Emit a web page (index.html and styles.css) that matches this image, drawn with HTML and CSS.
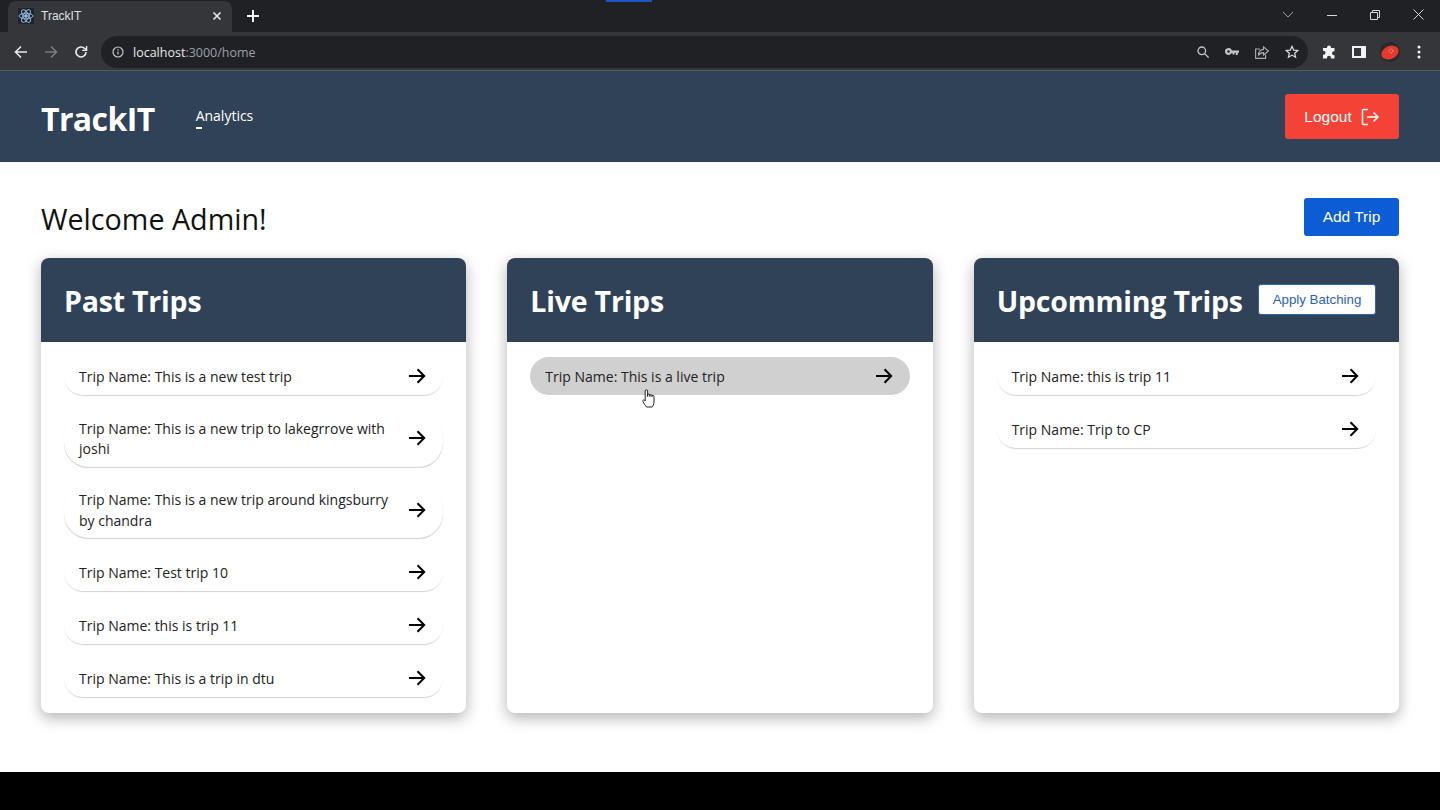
FILE: index.html
```html
<!DOCTYPE html>
<html lang="en">
<head>
    <meta charset="UTF-8">
    <meta name="viewport" content="width=device-width, initial-scale=1.0">
    <title>TrackIT</title>
    <link rel="stylesheet" href="styles.css">
</head>
<body>
    <div class="load-strip"></div>

    <!-- browser chrome -->
    <div class="tabbar">
        <div class="tab">
            <svg class="favicon" width="16" height="16" viewBox="0 0 16 16" fill="none" stroke="#8ab4d8" stroke-width="1">
                <rect width="16" height="16" fill="#20232a" stroke="none"/>
                <ellipse cx="8" cy="8" rx="7" ry="2.8"/>
                <ellipse cx="8" cy="8" rx="7" ry="2.8" transform="rotate(60 8 8)"/>
                <ellipse cx="8" cy="8" rx="7" ry="2.8" transform="rotate(120 8 8)"/>
                <circle cx="8" cy="8" r="1.4" fill="#8ab4d8"/>
            </svg>
            <span class="tab-title">TrackIT</span>
            <svg class="tab-close" width="10" height="10" viewBox="0 0 10 10" stroke="#e8eaed" stroke-width="1.6">
                <path d="M1.5 1.5l7 7M8.5 1.5l-7 7"/>
            </svg>
        </div>
        <svg class="new-tab" width="12" height="12" viewBox="0 0 12 12" stroke="#f1f3f4" stroke-width="2">
            <path d="M6 0v12M0 6h12"/>
        </svg>
        <div class="window-controls">
            <svg width="12" height="8" viewBox="0 0 12 8" fill="none" stroke="#9aa0a6"><path d="M1 1l5 5 5-5"/></svg>
            <svg width="10" height="10" viewBox="0 0 10 10" stroke="#d5d7da"><path d="M0 5.5h10"/></svg>
            <svg width="10" height="10" viewBox="0 0 10 10" fill="none" stroke="#d5d7da"><path d="M.5 2.5h7v7h-7zM2.5 2.5v-2h7v7h-2"/></svg>
            <svg width="11" height="11" viewBox="0 0 11 11" stroke="#d5d7da"><path d="M.5.5l10 10M10.5.5l-10 10"/></svg>
        </div>
    </div>
    <div class="toolbar">
        <svg class="tool-btn" width="14" height="14" viewBox="0 0 14 14" fill="none" stroke="#e8eaed" stroke-width="1.6"><path d="M13 7H2M7 1.5L1.5 7 7 12.5"/></svg>
        <svg class="tool-btn" width="14" height="14" viewBox="0 0 14 14" fill="none" stroke="#7b7e82" stroke-width="1.6"><path d="M1 7h11M7 1.5L12.5 7 7 12.5"/></svg>
        <svg class="tool-btn" width="14" height="14" viewBox="0 0 14 14" fill="none" stroke="#e8eaed" stroke-width="1.6"><path d="M12 7a5 5 0 1 1-1.5-3.6L12.5 5"/><path d="M12.6 1v4.4H8.2" stroke-width="1.4"/></svg>
        <div class="omnibox">
            <svg width="12" height="12" viewBox="0 0 12 12" fill="none" stroke="#c4c7ca" stroke-width="1.2"><circle cx="6" cy="6" r="5"/><path d="M6 5.4v3M6 3.2v1.2"/></svg>
            <span class="url"><span class="url-host">localhost</span>:3000/home</span>
            <div class="omni-icons">
                <svg width="12" height="12" viewBox="0 0 12 12" fill="none" stroke="#c4c7ca" stroke-width="1.3"><circle cx="4.8" cy="4.8" r="3.8"/><path d="M7.6 7.6l4 4"/></svg>
                <svg width="14" height="8" viewBox="0 0 14 8" fill="#c4c7ca"><path d="M3.5 0a3.5 3.5 0 1 1-3.2 5h0A3.5 3.5 0 0 1 3.5 0zm0 2.2a1.3 1.3 0 1 0 0 2.6 1.3 1.3 0 0 0 0-2.6zM6.5 2.5H14v2.2h-1.2V7h-2V4.700H9.500V6.500H7.500V4.700H6.500z"/></svg>
                <svg width="14" height="13" viewBox="0 0 14 13" fill="none" stroke="#a9acb0" stroke-width="1.1"><path d="M5 3H.6v9.400h10V8.500"/><path d="M8.500.8L13.400 5 8.500 9V6.600C6 6.600 4.500 7.400 3.400 9.500 3.600 6 5.500 3.700 8.500 3.400z"/></svg>
                <svg width="14" height="14" viewBox="0 0 14 14" fill="none" stroke="#dadce0" stroke-width="1.2"><path d="M7 1.300l1.700 3.800 4.100.4-3.100 2.700.9 4L7 10.100l-3.600 2.100.9-4-3.100-2.700 4.100-.4z"/></svg>
            </div>
        </div>
        <div class="tool-icons">
            <svg width="14" height="14" viewBox="0 0 14 14" fill="#f1f3f4"><path d="M5 2.500a2 2 0 0 1 4 0V3h3.500v3.200H12a2 2 0 0 0 0 4h.5V13.500H9v-.7a2 2 0 0 0-4 0v.7H1V9.800h.5a2 2 0 0 0 0-4H1V3h4z"/></svg>
            <svg width="14" height="12" viewBox="0 0 14 12" fill="none"><rect width="14" height="12" fill="#f1f3f4"/><rect x="2" y="2" width="7" height="8" fill="#35363a"/></svg>
            <svg class="avatar" width="20" height="20" viewBox="0 0 20 20"><circle cx="10" cy="10" r="10" fill="#26282b"/><ellipse cx="10" cy="10.500" rx="9" ry="6.500" fill="#e53a2b" transform="rotate(-25 10 10.500)"/><circle cx="11" cy="9" r="2" fill="none" stroke="#f5d5d0" stroke-width=".7" stroke-dasharray="1 1"/></svg>
            <svg width="4" height="14" viewBox="0 0 4 14" fill="#f1f3f4"><circle cx="2" cy="2" r="1.500"/><circle cx="2" cy="7" r="1.500"/><circle cx="2" cy="12" r="1.500"/></svg>
        </div>
    </div>

    <!-- app -->
    <nav class="navbar">
        <span class="brand">TrackIT</span>
        <a class="nav-link" href="#">Analytics</a>
        <button class="logout-btn">
            Logout
            <svg width="20" height="20" viewBox="0 0 20 20" fill="none" stroke="#fff" stroke-width="1.500"><path d="M8 2.500H3.500a1 1 0 0 0-1 1v13a1 1 0 0 0 1 1H8"/><path d="M7 10h11M13.500 5.500L18 10l-4.500 4.500"/></svg>
        </button>
    </nav>

    <main class="content">
        <div class="welcome-row">
            <h1 class="welcome">Welcome Admin!</h1>
            <button class="add-btn">Add Trip</button>
        </div>
        <div class="boards">
            <section class="board">
                <header class="board-head"><h2>Past Trips</h2></header>
                <ul class="trip-list">
                    <li class="trip"><span class="trip-name">Trip Name: This is a new test trip</span><svg class="arrow" width="18" height="16" viewBox="0 0 18 16" fill="none" stroke="#000" stroke-width="2"><path d="M1 8h15M9.500 1.200L16.200 8l-6.700 6.800"/></svg></li>
                    <li class="trip"><span class="trip-name">Trip Name: This is a new trip to lakegrrove with joshi</span><svg class="arrow" width="18" height="16" viewBox="0 0 18 16" fill="none" stroke="#000" stroke-width="2"><path d="M1 8h15M9.500 1.200L16.200 8l-6.700 6.800"/></svg></li>
                    <li class="trip"><span class="trip-name">Trip Name: This is a new trip around kingsburry by chandra</span><svg class="arrow" width="18" height="16" viewBox="0 0 18 16" fill="none" stroke="#000" stroke-width="2"><path d="M1 8h15M9.500 1.200L16.200 8l-6.700 6.800"/></svg></li>
                    <li class="trip"><span class="trip-name">Trip Name: Test trip 10</span><svg class="arrow" width="18" height="16" viewBox="0 0 18 16" fill="none" stroke="#000" stroke-width="2"><path d="M1 8h15M9.500 1.200L16.200 8l-6.700 6.800"/></svg></li>
                    <li class="trip"><span class="trip-name">Trip Name: this is trip 11</span><svg class="arrow" width="18" height="16" viewBox="0 0 18 16" fill="none" stroke="#000" stroke-width="2"><path d="M1 8h15M9.500 1.200L16.200 8l-6.700 6.800"/></svg></li>
                    <li class="trip"><span class="trip-name">Trip Name: This is a trip in dtu</span><svg class="arrow" width="18" height="16" viewBox="0 0 18 16" fill="none" stroke="#000" stroke-width="2"><path d="M1 8h15M9.500 1.200L16.200 8l-6.700 6.800"/></svg></li>
                </ul>
            </section>
            <section class="board">
                <header class="board-head"><h2>Live Trips</h2></header>
                <ul class="trip-list">
                    <li class="trip trip-hover"><span class="trip-name">Trip Name: This is a live trip</span><svg class="arrow" width="18" height="16" viewBox="0 0 18 16" fill="none" stroke="#000" stroke-width="2"><path d="M1 8h15M9.500 1.200L16.200 8l-6.700 6.800"/></svg></li>
                </ul>
            </section>
            <section class="board">
                <header class="board-head">
                    <h2>Upcomming Trips</h2>
                    <button class="batch-btn">Apply Batching</button>
                </header>
                <ul class="trip-list">
                    <li class="trip"><span class="trip-name">Trip Name: this is trip 11</span><svg class="arrow" width="18" height="16" viewBox="0 0 18 16" fill="none" stroke="#000" stroke-width="2"><path d="M1 8h15M9.500 1.200L16.200 8l-6.700 6.800"/></svg></li>
                    <li class="trip"><span class="trip-name">Trip Name: Trip to CP</span><svg class="arrow" width="18" height="16" viewBox="0 0 18 16" fill="none" stroke="#000" stroke-width="2"><path d="M1 8h15M9.500 1.200L16.200 8l-6.700 6.800"/></svg></li>
                </ul>
            </section>
        </div>
    </main>
    <div class="bottom-bar"></div>

    <!-- mouse pointer over the live trip -->
    <svg class="pointer" width="13" height="19" viewBox="0 0 13 19" fill="#fff" stroke="#222" stroke-width="1" stroke-linejoin="round">
        <path d="M3.200 10V2a1.200 1.200 0 0 1 2.400 0v5.500-1.300a1.100 1.100 0 0 1 2.200 0v1.300-.8a1.100 1.100 0 0 1 2.200 0v1-.3a1 1 0 0 1 2 0V13c0 2.500-1.300 4-1.800 5H4.500C3.500 16.500 2 15 1 12.500 .5 11 1.700 10 3.200 11.800z"/>
    </svg>
</body>
</html>
```

FILE: styles.css
```css
* {
    box-sizing: border-box;
}
html, body {
    height: 810px;
    overflow: hidden;
}
body {
    margin: 0;
    display: flex;
    flex-direction: column;
    font-family: "Open Sans", "Noto Sans", sans-serif;
    background: #fff;
    position: relative;
}
h1, h2, ul {
    margin: 0;
    padding: 0;
}
button {
    font-family: "Liberation Sans", Arial, sans-serif;
    cursor: pointer;
}

/* browser chrome */
.load-strip {
    position: absolute;
    top: 0;
    left: 606px;
    width: 46px;
    height: 2px;
    background: #1a56c4;
}
.tabbar {
    height: 32px;
    background: #202124;
    display: flex;
    align-items: center;
    flex-shrink: 0;
}
.tab {
    margin-left: 8px;
    align-self: flex-end;
    width: 224px;
    height: 31px;
    background: #35363a;
    border-radius: 8px 8px 0 0;
    display: flex;
    align-items: center;
    padding: 0 10px 2px;
    gap: 7px;
}
.tab-title {
    flex: 1;
    font-family: "Liberation Sans", sans-serif;
    font-size: 12px;
    color: #dfe1e5;
}
.new-tab {
    margin-left: 15px;
    margin-bottom: 1px;
}
.window-controls {
    margin-left: auto;
    margin-bottom: 3px;
    display: flex;
    align-items: center;
    gap: 33px;
    padding-right: 16px;
}
.toolbar {
    height: 39px;
    background: #35363a;
    border-bottom: 1px solid #56585c;
    display: flex;
    align-items: center;
    padding: 2px 0 0 14px;
    flex-shrink: 0;
}
.tool-btn {
    margin-right: 16px;
}
.tool-btn:nth-child(3) {
    margin-right: 13px;
}
.omnibox {
    width: 1207px;
    height: 32px;
    background: #202124;
    border-radius: 16px;
    display: flex;
    align-items: center;
    padding: 0 9px 0 11px;
}
.url {
    margin-left: 9px;
    font-family: "Open Sans", sans-serif;
    font-size: 12.500px;
    color: #9aa0a6;
}
.url-host {
    color: #e8eaed;
}
.omni-icons {
    margin-left: auto;
    display: flex;
    align-items: center;
    gap: 16px;
}
.tool-icons {
    display: flex;
    align-items: center;
    margin-left: 14px;
    gap: 16px;
}
.avatar {
    margin: 0 1px 0 -2px;
}

/* navbar */
.navbar {
    height: 91px;
    background: #304257;
    display: flex;
    align-items: center;
    padding: 0 41px;
    flex-shrink: 0;
}
.brand {
    font-size: 32px;
    font-weight: 700;
    color: #fff;
    line-height: 1;
    margin-top: 4px;
    letter-spacing: -.6px;
}
.nav-link {
    margin-left: 41px;
    margin-top: -3px;
    font-size: 14px;
    line-height: 19px;
    color: #fff;
    text-decoration: none;
    position: relative;
}
.nav-link::after {
    content: "";
    position: absolute;
    left: 0;
    bottom: -4px;
    width: 6px;
    height: 1.500px;
    background: #fff;
}
.logout-btn {
    margin-left: auto;
    width: 114px;
    height: 45px;
    margin-top: -1px;
    padding: 2px 0 0;
    background: #f44336;
    border: 0;
    border-radius: 3px;
    color: #fff;
    font-size: 15.500px;
    display: flex;
    align-items: center;
    justify-content: center;
    gap: 8px;
}

/* main */
.content {
    flex: 1;
    padding: 36px 41px 0;
}
.welcome-row {
    display: flex;
    align-items: center;
    justify-content: space-between;
    height: 38px;
}
.welcome {
    font-size: 28.700px;
    font-weight: 400;
    color: #111;
    margin-top: 2px;
}
.add-btn {
    width: 95px;
    height: 38px;
    background: #0b5cd5;
    border: 0;
    border-radius: 3px;
    color: #fff;
    font-size: 15.500px;
}
.boards {
    margin-top: 22px;
    display: grid;
    grid-template-columns: repeat(3, 1fr);
    gap: 41px;
}
.board {
    height: 455px;
    background: #fff;
    border-radius: 8px;
    overflow: hidden;
    box-shadow: 0 5px 15px rgba(0, 0, 0, .3);
}
.board-head {
    height: 84px;
    background: #304257;
    color: #fff;
    display: flex;
    align-items: center;
    justify-content: space-between;
    padding: 0 23px;
}
.board-head h2 {
    font-size: 28.500px;
    font-weight: 700;
    letter-spacing: -.2px;
    white-space: nowrap;
    margin-top: 2px;
}
.batch-btn {
    width: 118px;
    height: 31px;
    margin-top: -1px;
    background: #fff;
    border: 1px solid #2d62b5;
    border-radius: 3px;
    color: #2d62b5;
    font-size: 13.300px;
    padding: 0;
}
.trip-list {
    list-style: none;
    padding: 15px 23px 0;
    display: flex;
    flex-direction: column;
    gap: 15px;
}
.trip {
    min-height: 38px;
    padding: 8.750px 17px 7.250px 15px;
    border-radius: 25px;
    box-shadow: 0 1.500px 1px -.5px rgba(0, 0, 0, .18);
    display: flex;
    align-items: center;
    justify-content: space-between;
    gap: 17px;
    font-size: 14px;
    line-height: 20.250px;
    color: #222;
}
.trip-hover {
    background: #d0d0d0;
    box-shadow: none;
}
.arrow {
    flex-shrink: 0;
    margin-top: -2px;
}
.bottom-bar {
    height: 38px;
    background: #000;
    flex-shrink: 0;
}
.pointer {
    position: absolute;
    left: 642px;
    top: 389px;
}
```
